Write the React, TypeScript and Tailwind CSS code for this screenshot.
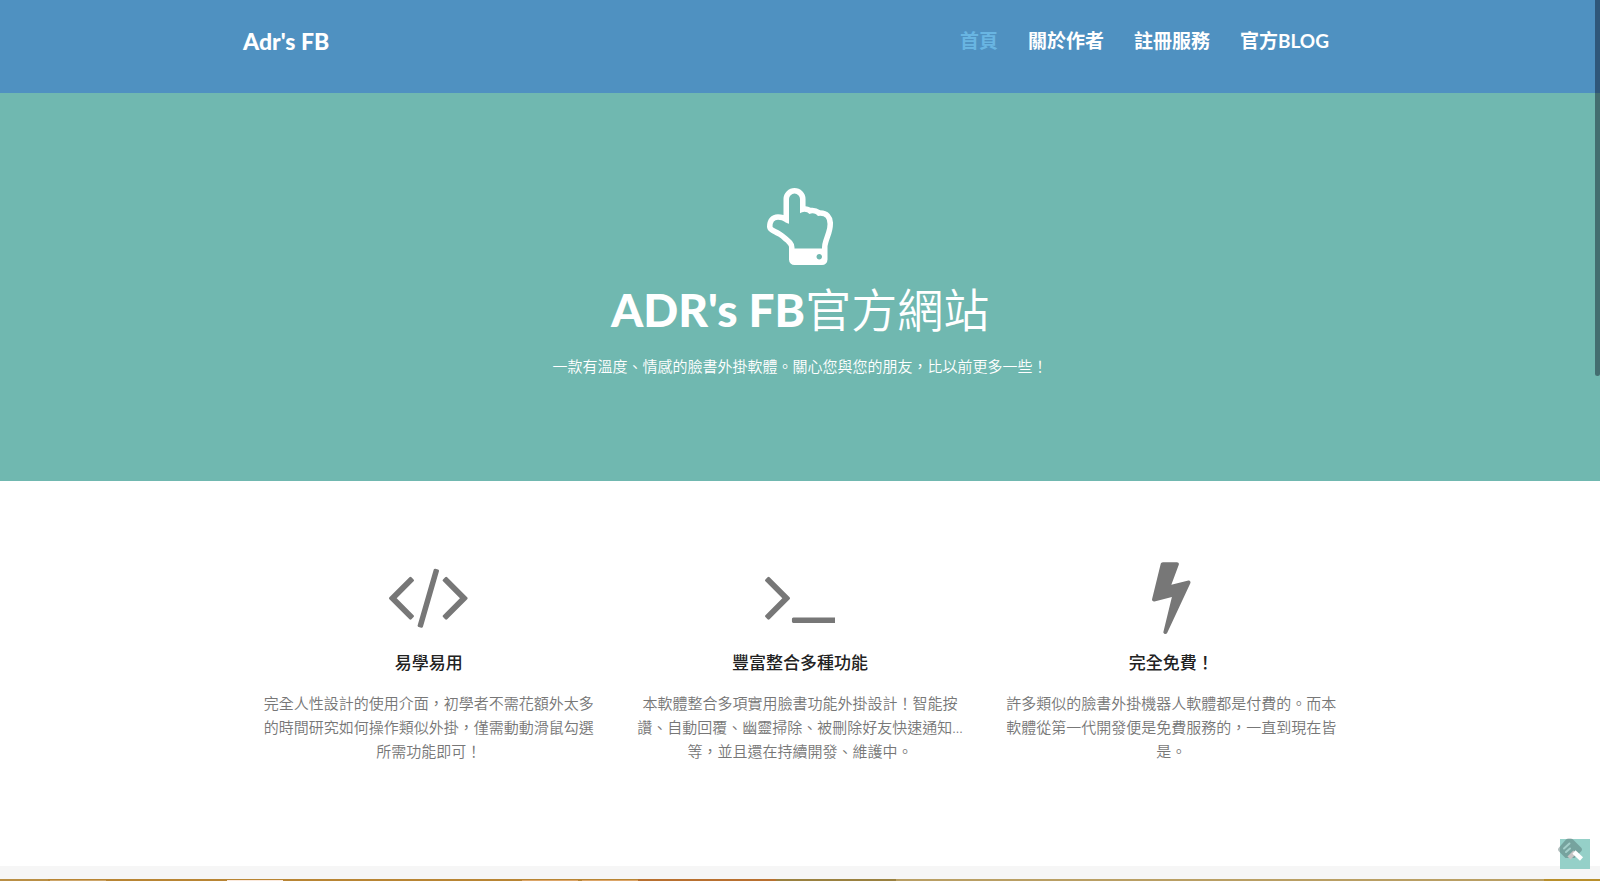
import { ReactNode } from "react";

const NAV_LINKS = [
  { label: "首頁", href: "#home", active: true },
  { label: "關於作者", href: "#about" },
  { label: "註冊服務", href: "#register" },
  { label: "官方BLOG", href: "#blog" },
];

interface Feature {
  title: string;
  text: string;
  icon: ReactNode;
}

const FEATURES: Feature[] = [
  {
    title: "易學易用",
    text: "完全人性設計的使用介面，初學者不需花額外太多的時間研究如何操作類似外掛，僅需動動滑鼠勾選所需功能即可！",
    icon: (
      <svg viewBox="-19 0 1830 1792" className="h-[77px]" fill="currentColor" aria-hidden="true">
        <path d="M553 1399l-50 50q-10 10-23 10t-23-10l-466-466q-10-10-10-23t10-23l466-466q10-10 23-10t23 10l50 50q10 10 10 23t-10 23l-393 393 393 393q10 10 10 23t-10 23zm591-1067l-373 1291q-4 13-15.5 19.5t-23.5 2.5l-62-17q-13-4-19.5-15.5t-2.5-24.5l373-1291q4-13 15.5-19.5t23.5-2.5l62 17q13 4 19.5 15.5t2.5 24.5zm657 651l-466 466q-10 10-23 10t-23-10l-50-50q-10-10-10-23t10-23l393-393-393-393q-10-10-10-23t10-23l50-50q10-10 23-10t23 10l466 466q10 10 10 23t-10 23z" />
      </svg>
    ),
  },
  {
    title: "豐富整合多種功能",
    text: "本軟體整合多項實用臉書功能外掛設計！智能按讚、自動回覆、幽靈掃除、被刪除好友快速通知...等，並且還在持續開發、維護中。",
    icon: (
      <svg viewBox="77 0 1651 1792" className="h-[77px]" fill="currentColor" aria-hidden="true">
        <path d="M649 983l-466 466q-10 10-23 10t-23-10l-50-50q-10-10-10-23t10-23l393-393-393-393q-10-10-10-23t10-23l50-50q10-10 23-10t23 10l466 466q10 10 10 23t-10 23zm1079 457v64q0 14-9 23t-23 9h-960q-14 0-23-9t-9-23v-64q0-14 9-23t23-9h960q14 0 23 9t9 23z" />
      </svg>
    ),
  },
  {
    title: "完全免費！",
    text: "許多類似的臉書外掛機器人軟體都是付費的。而本軟體從第一代開發便是免費服務的，一直到現在皆是。",
    icon: (
      <svg viewBox="448 0 896 1792" className="h-[77px]" fill="currentColor" aria-hidden="true">
        <path d="M1333 566q18 20 7 44l-540 1157q-13 25-42 25-4 0-14-2-17-5-25.5-19t-4.5-30l197-808-406 101q-4 1-12 1-18 0-31-11-18-15-13-39l201-825q4-16 18-26t33-10h328q19 0 32 12.5t13 29.5q0 8-5 18l-171 463 396-98q8-2 12-2 19 0 34 15z" />
      </svg>
    ),
  },
];

function Header() {
  return (
    <header className="h-[93px] bg-[#4f91c1]">
      <div className="mx-auto flex max-w-[1114px] items-center justify-between pt-[25px]">
        <a href="#home" className="text-[23px] leading-8 font-black text-white">
          Adr's FB
        </a>
        <nav className="flex gap-[30px] pr-7 text-[19px] leading-8 font-bold">
          {NAV_LINKS.map((link) => (
            <a
              key={link.href}
              href={link.href}
              className={link.active ? "text-[#69b5e2]" : "text-white"}
            >
              {link.label}
            </a>
          ))}
        </nav>
      </div>
    </header>
  );
}

function Hero() {
  return (
    <section
      id="home"
      className="flex h-[388px] flex-col items-center bg-[#70b8b0] pt-[95px] text-center text-white"
    >
      <svg viewBox="0 0 1536 1792" className="h-[77px]" fill="currentColor" aria-hidden="true">
        <path d="M1280 1600q0-26-19-45t-45-19-45 19-19 45 19 45 45 19 45-19 19-45zm128-764q0-189-167-189-26 0-56 5-16-30-52.5-47.5t-73.5-17.5-69 18q-50-53-119-53-25 0-55.5 10t-47.5 25v-331q0-52-38-90t-90-38q-51 0-89.5 39t-38.5 89v576q-20 0-48.5-15t-55-33-68-33-84.5-15q-67 0-97.5 44.5t-30.5 115.5q0 24 139 90 44 24 65 37 64 40 145 112 81 71 106 101 57 69 57 140v32h640v-32q0-72 32-167t64-193.5 32-179.5zm128-5q0 133-69 322-59 164-59 223v288q0 53-37.5 90.5t-90.5 37.5h-640q-53 0-90.5-37.5t-37.5-90.5v-288q0-10-4.5-21.5t-14-23.5-18-22.5-22.5-24-21.5-20.5-21.5-19-17-14q-74-65-129-100-21-13-62-33t-72-37-63-40.5-49.5-55-17.5-69.5q0-125 67-206.5t189-81.5q68 0 128 22v-374q0-104 77-180t179-76q105 0 181 75.5t76 180.5v169q62 4 119 37 21-3 43-3 101 0 178 60 139-1 219.5 85t80.5 227z" />
      </svg>
      <h1 className="mt-[15px] text-[46px] leading-[60px] font-[350]">
        <span className="font-black">ADR's FB</span>官方網站
      </h1>
      <p className="mt-[14px] text-[15px] leading-6 font-[350]">
        一款有溫度、情感的臉書外掛軟體。關心您與您的朋友，比以前更多一些！
      </p>
    </section>
  );
}

function FeatureCard({ title, text, icon }: Feature) {
  return (
    <div className="flex flex-col items-center px-4 text-center text-[#777777]">
      {icon}
      <h2 className="mt-[15px] text-[17px] leading-7 font-medium text-[#222222]">{title}</h2>
      <p className="mt-[14px] text-[15px] leading-6 font-[350]">{text}</p>
    </div>
  );
}

function BackToTop() {
  return (
    <button
      type="button"
      aria-label="回到頂端"
      className="absolute right-[10px] bottom-3 size-[30px] bg-[#95d0c8]"
    >
      <svg viewBox="0 0 30 30" className="size-[30px] overflow-visible" aria-hidden="true">
        <path
          d="M8.500 -0.500h2q1.500 0 2.500 1l8 8q2 2 0 4l-6.500 6.500h-9l-6.500 -6.500q-2 -2 0 -4l7 -8q1 -1 2.500 -1z"
          fill="#4f6c6a"
          fillOpacity="0.450"
        />
        <path
          d="M4 9.500l5.500 -5M6 13l4 -3.500"
          fill="none"
          stroke="#a4cfca"
          strokeWidth="2"
          strokeLinecap="round"
        />
        <path d="M9 19l6 -6" fill="none" stroke="#c9c5c5" strokeWidth="4.500" />
        <path d="M14 13l7.500 7" fill="none" stroke="#ffffff" strokeWidth="4.500" />
      </svg>
    </button>
  );
}

export default function App() {
  return (
    <div className="relative flex min-h-screen flex-col bg-white font-[Lato,'Noto_Sans_CJK_TC',sans-serif]">
      <Header />
      <main className="flex grow flex-col">
        <Hero />
        <section id="features" className="pt-[76px] pb-[103px]">
          <div className="mx-auto grid max-w-[1114px] grid-cols-3">
            {FEATURES.map((feature) => (
              <FeatureCard key={feature.title} {...feature} />
            ))}
          </div>
        </section>
        <div className="min-h-3 grow bg-[#f6f6f6]" />
      </main>

      {/* top edge of the desktop bar */}
      <footer className="flex h-[2px] bg-[#b88534]">
        <div className="w-[3%] bg-[#b98f45]" />
        <div className="mt-px ml-[2px] w-[56px] bg-[#cda66a]" />
        <div className="mt-px ml-[121px] w-[56px] bg-[#fbe9dc]" />
        <div className="mt-px ml-[239px] w-[56px] bg-[#dca669]" />
        <div className="mt-px ml-1 w-[56px] bg-[#dca669]" />
        <div className="w-[138px] bg-[#b87030]" />
        <div className="w-[120px] bg-[#9a8140]" />
        <div className="grow bg-[#b99f64]" />
        <div className="w-[56px] bg-[#b88f2c]" />
      </footer>

      <BackToTop />
      <div className="absolute top-0 right-0 h-[376px] w-[5px] rounded-b-sm bg-[#000010]/40" />
    </div>
  );
}
